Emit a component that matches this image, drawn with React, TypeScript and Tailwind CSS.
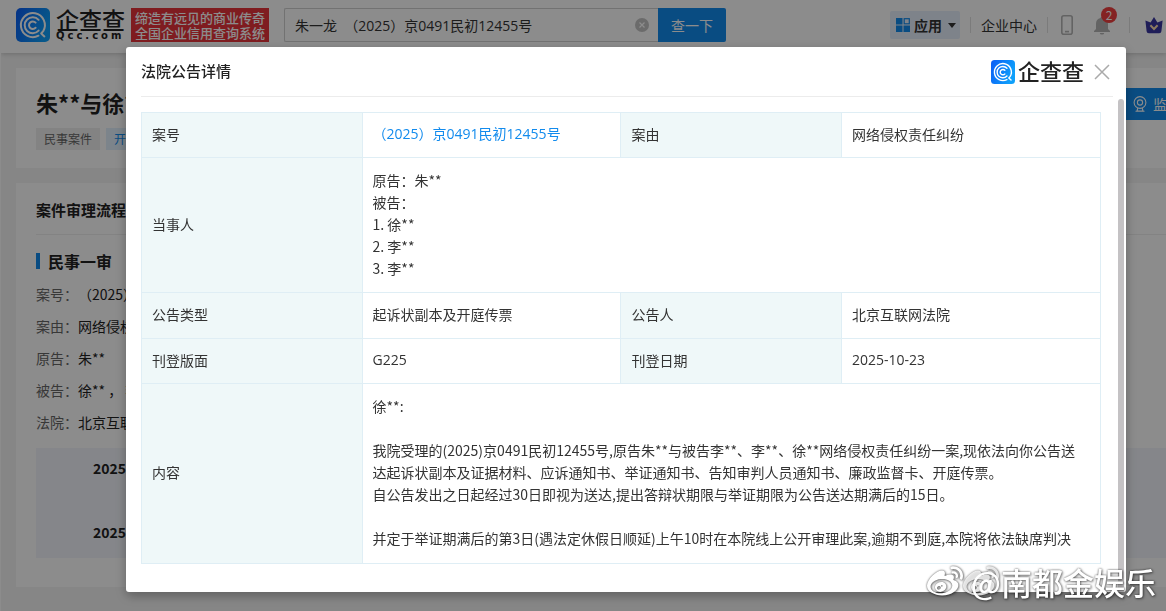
import React from "react";
import { FaWeibo } from "react-icons/fa";

const caseRows = [
  { label: "案号：", value: "（2025）京0491民初12455号" },
  { label: "案由：", value: "网络侵权责任纠纷" },
  { label: "原告：", value: "朱**" },
  { label: "被告：", value: "徐** ， 李** ， 李**" },
  { label: "法院：", value: "北京互联网法院" },
];

const th = "border border-[#dfeef5] bg-[#eff8f9] px-[10px] pt-[9px] pb-3 text-left font-normal";
const td = "border border-[#dfeef5] px-[10px] pt-[9px] pb-3";
// Case numbers and dates use the wider numerals
const numerals = "font-['Open_Sans','Noto_Sans_CJK_SC',sans-serif]";

function QccIcon({ id, className }: { id: string; className: string }) {
  return (
    <svg viewBox="0 0 34 34" className={className} fill="none" aria-hidden="true">
      <defs>
        <linearGradient id={id} x1="0" y1="0" x2="1" y2="0.4">
          <stop offset="0" stopColor="#0a5cf5" />
          <stop offset="1" stopColor="#0fa0fb" />
        </linearGradient>
      </defs>
      <rect width="34" height="34" rx="5" fill={`url(#${id})`} />
      <g stroke="#fff" strokeWidth="2" strokeLinecap="round">
        {/* Outer ring with the Q tail */}
        <path d="M22.5 27.7A12 12 0 1 1 27.2 23.2L25.2 25.5L28.4 28.4" strokeLinejoin="round" />
        <path d="M22.6 22.6A8 8 0 1 1 22.6 11.8" />
        <path d="M19.6 19.8A3.8 3.8 0 1 1 19.6 14.6" />
      </g>
    </svg>
  );
}

function Divider() {
  return <span className="h-4 w-px bg-[#e0e0e0]" />;
}

function Header() {
  return (
    <header className="relative flex h-[52px] items-center bg-white pb-1 pl-[15px] shadow-[0_1px_5px_rgba(0,0,0,0.2)]">
      <a href="#" className="flex items-center gap-[6px]" aria-label="企查查">
        <QccIcon id="qcc-header" className="size-[34px]" />
        <span className="flex w-[72px] flex-col text-[#222]">
          <span className="text-[23px] leading-[22px] font-medium">企查查</span>
          <span className="font-['DejaVu_Sans',sans-serif] text-[10px] leading-3 font-bold tracking-[3px]">
            Qcc.com
          </span>
        </span>
      </a>
      <p className="ml-[3px] shrink-0 bg-[#e8343b] px-1 py-[2px] text-[13px] leading-[15px] font-medium text-white">
        缔造有远见的商业传奇
        <br />
        全国企业信用查询系统
      </p>

      <form className="ml-[15px] flex h-[34px] shrink-0" onSubmit={(e) => e.preventDefault()}>
        <div className="relative">
          <input
            aria-label="搜索"
            defaultValue="朱一龙  （2025）京0491民初12455号"
            className={`h-[34px] w-[374px] rounded-l-xs border border-r-0 border-[#d0d0d0] bg-white px-[10px] text-[14px] text-[#333] outline-none ${numerals}`}
          />
          <button
            type="button"
            aria-label="清空"
            className="absolute top-[10px] right-[9px] flex size-[14px] items-center justify-center rounded-full bg-[#c4c4c4]"
          >
            <svg viewBox="0 0 8 8" className="size-2" stroke="#fff" strokeWidth="1.2">
              <path d="M1.5 1.5L6.5 6.5M6.5 1.5L1.5 6.5" />
            </svg>
          </button>
        </div>
        <button type="submit" className="w-[68px] rounded-r-xs bg-[#128bed] text-[14px] text-white">
          查一下
        </button>
      </form>

      <nav className="ml-auto flex shrink-0 items-center gap-[10px] pr-[3px] text-[14px] text-[#333]">
        <button type="button" className="flex h-7 w-[70px] items-center rounded-xs bg-[#e6eefb] pl-[6px]">
          <svg viewBox="0 0 14 14" className="size-[14px]" fill="#128bed">
            <rect width="6.5" height="6.5" />
            <rect y="7.5" width="6.5" height="6.5" />
            <rect x="7.5" y="7.5" width="6.5" height="6.5" />
            <rect x="8.2" y="0.7" width="5.1" height="5.1" fill="none" stroke="#128bed" strokeWidth="1.2" />
          </svg>
          <span className="ml-1 font-bold">应用</span>
          <svg viewBox="0 0 8 5" className="ml-[6px] h-[5px] w-2" fill="#333">
            <path d="M0 0H8L4 5Z" />
          </svg>
        </button>
        <Divider />
        <a href="#">企业中心</a>
        <Divider />
        <button type="button" aria-label="手机版" className="ml-[3px]">
          <svg viewBox="0 0 12 20" className="h-5 w-3" fill="none" stroke="#b5b5b5" strokeWidth="1.6">
            <rect x="0.8" y="0.8" width="10.4" height="18.4" rx="2" />
            <path d="M4 16.6H8" />
          </svg>
        </button>
        <button type="button" aria-label="消息" className="relative mr-2 ml-[10px]">
          <svg viewBox="0 0 18 20" className="h-5 w-[18px]" fill="#b5b5b5">
            <path d="M9 1.5A1.4 1.4 0 0 1 10.4 3A6 6 0 0 1 15 9V14L17 16V17H1V16L3 14V9A6 6 0 0 1 7.6 3A1.4 1.4 0 0 1 9 1.5ZM6.8 18H11.2A2.2 1.6 0 0 1 6.8 18Z" />
          </svg>
          <span className="absolute -top-2 left-2 flex size-4 items-center justify-center rounded-full bg-[#f04040] text-[12px] leading-none text-white">
            2
          </span>
        </button>
        <Divider />
        <button type="button" aria-label="会员" className="ml-[5px]">
          <svg viewBox="0 0 18 17" className="h-[17px] w-[18px]">
            <path
              d="M9 0L12.4 5.4L17.6 3.4L16.4 14.2Q16.2 16.2 14.2 16.2H3.8Q1.8 16.2 1.6 14.2L0.4 3.4L5.6 5.4Z"
              fill="#3a35a0"
            />
            <path d="M5.4 8.2L9 12L12.6 8.2" fill="none" stroke="#ffe0b0" strokeWidth="2" />
          </svg>
        </button>
      </nav>
    </header>
  );
}

function CasePage() {
  return (
    <main className="pt-[15px] pl-[15px]">
      <section className="flex h-[100px] items-start bg-white pl-[20px]">
        <div className="pt-[18px]">
          <h1 className="text-[22px] leading-[32px] font-bold text-[#222]">朱**与徐**网络侵权责任纠纷</h1>
          <div className="mt-[10px] flex gap-[6px] text-[12px] leading-[22px]">
            <span className="bg-[#eeeeee] px-2 text-[#666]">民事案件</span>
            <span className="bg-[#e2f1fd] px-2 text-[#128bed]">开庭公告</span>
          </div>
        </div>
        <button
          type="button"
          className="mt-5 -mr-[27px] ml-auto flex h-8 shrink-0 items-center gap-[6px] bg-[#128bed] px-3 text-[14px] text-white"
        >
          <svg viewBox="0 0 14 16" className="h-4 w-[14px]" fill="none" stroke="#fff" strokeWidth="1.1">
            <circle cx="7" cy="6.5" r="5.9" />
            <circle cx="7" cy="6.5" r="2.6" />
            <path d="M4.8 12L4 15H10L9.2 12M2.5 15.2H11.5" />
          </svg>
          监控
        </button>
      </section>

      <section className="mt-[15px] bg-white pb-[29px] pl-[20px]">
        <h2 className="border-b border-[#eee] pt-[15px] pb-[13px] text-[15px] leading-[23px] font-bold text-[#222]">
          案件审理流程
        </h2>
        <h3 className="mt-[14px] flex items-center gap-2 text-[16px] leading-6 font-bold text-[#222]">
          <span className="h-4 w-1 bg-[#128bed]" />
          民事一审
        </h3>
        <dl className="mt-[5px] text-[14px] leading-8">
          {caseRows.map((row) => (
            <div key={row.label} className="flex">
              <dt className="text-[#666]">{row.label}</dt>
              <dd className="text-[#222]">{row.value}</dd>
            </div>
          ))}
        </dl>
        <ol className="mt-[10px] bg-[#f3f5fb] pt-[4px] pb-[10px] pl-[57px] text-[14px] leading-8 font-bold text-[#222]">
          <li>2025-10-23</li>
          <li className="mt-8">2025-10-23</li>
        </ol>
      </section>
    </main>
  );
}

function NoticeTable() {
  return (
    <table className="w-full table-fixed border-collapse text-[14px] leading-[22px] text-[#333]">
      <colgroup>
        <col className="w-[23%]" />
        <col className="w-[27%]" />
        <col className="w-[23%]" />
        <col className="w-[27%]" />
      </colgroup>
      <tbody>
        <tr className="h-[45px]">
          <th scope="row" className={th}>案号</th>
          <td className={td}>
            <a href="#" className={`text-[#128bed] ${numerals}`}>（2025）京0491民初12455号</a>
          </td>
          <th scope="row" className={th}>案由</th>
          <td className={td}>网络侵权责任纠纷</td>
        </tr>
        <tr className="h-[135px]">
          <th scope="row" className={th}>当事人</th>
          <td className={td} colSpan={3}>
            <p>原告：朱**</p>
            <p>被告：</p>
            <p>1. 徐**</p>
            <p>2. 李**</p>
            <p>3. 李**</p>
          </td>
        </tr>
        <tr className="h-[46px]">
          <th scope="row" className={th}>公告类型</th>
          <td className={td}>起诉状副本及开庭传票</td>
          <th scope="row" className={th}>公告人</th>
          <td className={td}>北京互联网法院</td>
        </tr>
        <tr className="h-[45px]">
          <th scope="row" className={th}>刊登版面</th>
          <td className={`${td} ${numerals}`}>G225</td>
          <th scope="row" className={th}>刊登日期</th>
          <td className={`${td} ${numerals}`}>2025-10-23</td>
        </tr>
        <tr className="h-[180px]">
          <th scope="row" className={th}>内容</th>
          <td className="border border-[#dfeef5] pt-[10px] pr-5 pb-[14px] pl-[10px]" colSpan={3}>
            <p>徐**:</p>
            <br />
            <p>
              我院受理的(2025)京0491民初12455号,原告朱**与被告李**、李**、徐**网络侵权责任纠纷一案,现依法向你公告送达起诉状副本及证据材料、应诉通知书、举证通知书、告知审判人员通知书、廉政监督卡、开庭传票。
            </p>
            <p>自公告发出之日起经过30日即视为送达,提出答辩状期限与举证期限为公告送达期满后的15日。</p>
            <br />
            <p>并定于举证期满后的第3日(遇法定休假日顺延)上午10时在本院线上公开审理此案,逾期不到庭,本院将依法缺席判决</p>
          </td>
        </tr>
      </tbody>
    </table>
  );
}

function NoticeDialog() {
  return (
    <div className="fixed inset-0 flex items-start bg-black/45 pt-[47px] pr-10 pl-[126px]">
      <div
        role="dialog"
        aria-labelledby="notice-title"
        className="min-w-0 flex-1 rounded-[3px] bg-white shadow-[0_4px_12px_rgba(0,0,0,0.3)]"
      >
        <div className="mr-[13px] ml-[15px] flex h-[50px] items-center border-b border-[#ececec]">
          <h2 id="notice-title" className="text-[15px] font-medium text-[#222]">法院公告详情</h2>
          <div className="ml-auto flex items-center gap-[3px]">
            <QccIcon id="qcc-dialog" className="size-6" />
            <span className="pb-1 text-[22px] leading-6 font-medium text-[#222]">企查查</span>
          </div>
          <button type="button" aria-label="关闭" className="mr-[3px] ml-[10px]">
            <svg viewBox="0 0 16 16" className="size-4" stroke="#aaa" strokeWidth="1.5">
              <path d="M1 1L15 15M15 1L1 15" />
            </svg>
          </button>
        </div>
        <div className="flex">
          <div className="min-w-0 flex-1 pt-[15px] pb-[28px] pl-[15px]">
            <NoticeTable />
          </div>
          {/* Scrollbar thumb */}
          <div className="mt-[2px] mr-[2px] ml-[17px] w-[6px] rounded-t-full bg-[#c4c2c4]" />
        </div>
      </div>
    </div>
  );
}

function Watermark() {
  return (
    <div className="fixed right-[10px] bottom-[7px] flex items-center text-white [filter:drop-shadow(0_0_1px_rgba(0,0,0,0.6))_drop-shadow(1px_1px_1px_rgba(0,0,0,0.35))]">
      <FaWeibo className="size-[36px]" />
      <FaWeibo className="-mr-7 size-[36px] opacity-80" />
      <span className="text-[31px] leading-[44px] font-medium">@南都金娱乐</span>
    </div>
  );
}

export default function App() {
  return (
    <div className="min-h-screen overflow-hidden border-t border-l border-white bg-[#f5f5f5] font-['Noto_Sans_CJK_SC',sans-serif] whitespace-nowrap">
      <Header />
      <CasePage />
      <div className="whitespace-normal">
        <NoticeDialog />
        <Watermark />
      </div>
    </div>
  );
}
